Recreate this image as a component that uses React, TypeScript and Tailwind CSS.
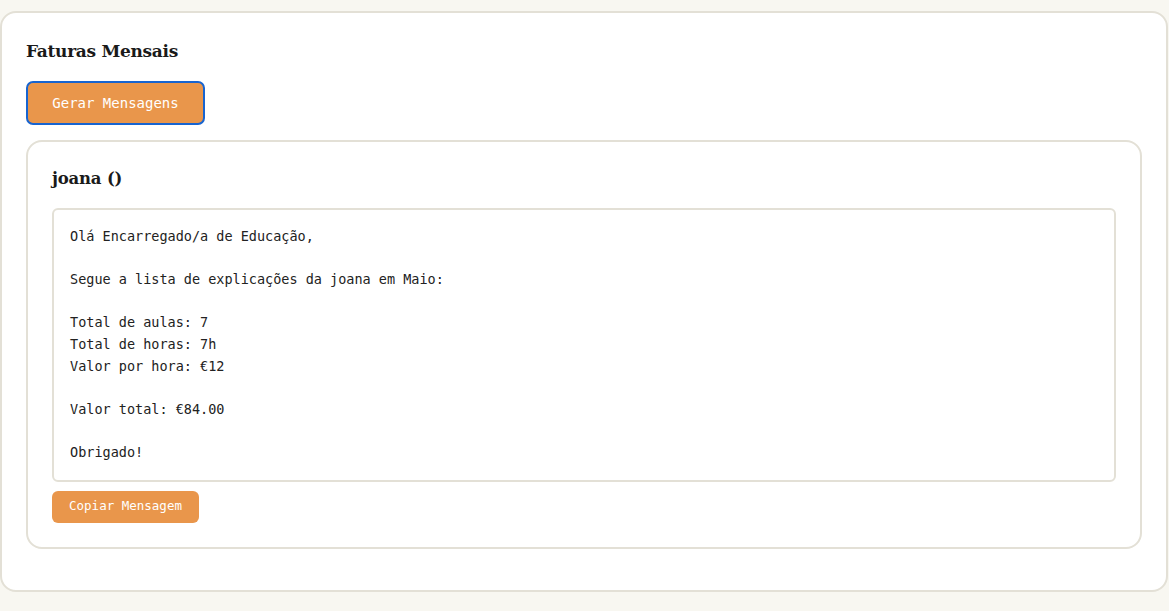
import React from "react";

const message = `Olá Encarregado/a de Educação,

Segue a lista de explicações da joana em Maio:

Total de aulas: 7
Total de horas: 7h
Valor por hora: €12

Valor total: €84.00

Obrigado!`;

export default function App() {
  return (
    <div className="min-h-[611px] bg-[#f8f7f1] pt-[11px] pr-[1px] pb-[20px] pl-0">
      <div className="rounded-[16px] border-2 border-[#e3e0d6] bg-white p-6">
        <h2 className="mb-4 font-['DejaVu_Serif',serif] text-[17px] leading-[28px] font-bold tracking-[-0.3px] text-[#1a1a1a]">
          Faturas Mensais
        </h2>
        <button className="h-[44px] w-[179px] rounded-[7px] border-2 border-[#1764d0] bg-[#e9964b] font-['DejaVu_Sans_Mono',monospace] text-[14px] text-white">
          Gerar Mensagens
        </button>
        <div className="mt-[15px] mb-[17px] rounded-[16px] border-2 border-[#e3e0d6] bg-white p-6">
          <h3 className="mb-[16px] font-['DejaVu_Serif',serif] text-[16.5px] leading-[26px] font-bold tracking-[-0.2px] text-[#1a1a1a]">
            joana ()
          </h3>
          <div className="whitespace-pre rounded-[6px] border-2 border-[#e3e0d6] bg-white p-4 font-['DejaVu_Sans_Mono',monospace] text-[13.5px] leading-[21.6px] text-[#222]">
            {message}
          </div>
          <button className="mt-[9px] h-[32px] w-[147px] rounded-[6px] bg-[#e9964b] font-['DejaVu_Sans_Mono',monospace] text-[12.5px] text-white">
            Copiar Mensagem
          </button>
        </div>
      </div>
    </div>
  );
}
